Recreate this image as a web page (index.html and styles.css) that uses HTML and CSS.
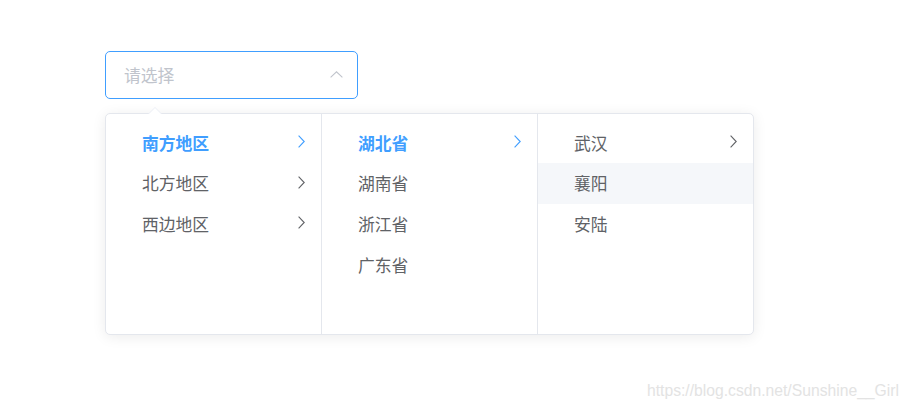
FILE: index.html
```html
<!DOCTYPE html>
<html lang="zh-CN">
<head>
<meta charset="utf-8">
<title>Cascader</title>
<link rel="stylesheet" href="styles.css">
</head>
<body>
<div class="page">
  <div class="cascader">
    <div class="input">
      <span class="placeholder">请选择</span>
      <svg class="caret" width="13" height="7" viewBox="0 0 13 7"><path d="M0.6 6.4 L6.5 0.8 L12.4 6.4" fill="none" stroke="#c0c4cc" stroke-width="1.1"/></svg>
    </div>
    <div class="dropdown">
      <span class="pop-arrow"></span>
      <div class="menus">
        <ul class="menu">
          <li class="node active"><span class="label">南方地区</span><svg class="chev" width="7" height="13" viewBox="0 0 7 13"><path d="M0.6 0.6 L6.2 6.5 L0.6 12.4" fill="none" stroke="currentColor" stroke-width="1.1"/></svg></li>
          <li class="node"><span class="label">北方地区</span><svg class="chev" width="7" height="13" viewBox="0 0 7 13"><path d="M0.6 0.6 L6.2 6.5 L0.6 12.4" fill="none" stroke="currentColor" stroke-width="1.1"/></svg></li>
          <li class="node"><span class="label">西边地区</span><svg class="chev" width="7" height="13" viewBox="0 0 7 13"><path d="M0.6 0.6 L6.2 6.5 L0.6 12.4" fill="none" stroke="currentColor" stroke-width="1.1"/></svg></li>
        </ul>
        <ul class="menu">
          <li class="node active"><span class="label">湖北省</span><svg class="chev" width="7" height="13" viewBox="0 0 7 13"><path d="M0.6 0.6 L6.2 6.5 L0.6 12.4" fill="none" stroke="currentColor" stroke-width="1.1"/></svg></li>
          <li class="node"><span class="label">湖南省</span></li>
          <li class="node"><span class="label">浙江省</span></li>
          <li class="node"><span class="label">广东省</span></li>
        </ul>
        <ul class="menu">
          <li class="node"><span class="label">武汉</span><svg class="chev" width="7" height="13" viewBox="0 0 7 13"><path d="M0.6 0.6 L6.2 6.5 L0.6 12.4" fill="none" stroke="currentColor" stroke-width="1.1"/></svg></li>
          <li class="node hover"><span class="label">襄阳</span></li>
          <li class="node"><span class="label">安陆</span></li>
        </ul>
      </div>
    </div>
  </div>
  <div class="watermark">https://blog.csdn.net/Sunshine__Girl</div>
</div>
</body>
</html>
```

FILE: styles.css
```css
html, body {
  margin: 0;
  padding: 0;
  background: #ffffff;
}

.page {
  width: 909px;
  height: 409px;
  box-sizing: border-box;
  padding-top: 51px;
  font-family: "Noto Sans CJK SC", "Noto Sans", sans-serif;
  color: #606266;
  overflow: hidden;
}

.cascader {
  margin-left: 105px;
  width: 649px;
}

.input {
  width: 253px;
  height: 48px;
  box-sizing: border-box;
  border: 1px solid #409eff;
  border-radius: 5px;
  display: flex;
  align-items: center;
  padding: 0 14px 0 18px;
  background: #fff;
}

.placeholder {
  flex: 1;
  font-size: 16.8px;
  color: #c0c4cc;
  line-height: 1;
}

.caret {
  display: block;
  margin-top: -2px;
}

.dropdown {
  position: relative;
  margin-top: 14px;
  width: 649px;
  height: 222px;
  box-sizing: border-box;
  border: 1px solid #e4e7ed;
  border-radius: 5px;
  background: #fff;
  box-shadow: 0 2px 14px 0 rgba(0, 0, 0, 0.08);
}

.pop-arrow {
  position: absolute;
  left: 42px;
  top: -7px;
  width: 0;
  height: 0;
  border-left: 7px solid transparent;
  border-right: 7px solid transparent;
  border-bottom: 7px solid #ebeef5;
}

.pop-arrow::after {
  content: "";
  position: absolute;
  left: -6px;
  top: 1px;
  width: 0;
  height: 0;
  border-left: 6px solid transparent;
  border-right: 6px solid transparent;
  border-bottom: 6px solid #fff;
}

.menus {
  display: flex;
  height: 100%;
}

.menu {
  list-style: none;
  margin: 0;
  padding: 8px 0 0 0;
  width: 216px;
  box-sizing: border-box;
  border-right: 1px solid #e4e7ed;
}

.menu:last-child {
  border-right: none;
  width: 215px;
}

.node {
  display: flex;
  align-items: center;
  height: 40.8px;
  padding: 0 16px 0 36px;
  font-size: 16.8px;
  color: #606266;
}

.node .label {
  flex: 1;
  line-height: 1;
  margin-top: 1px;
}

.node .chev {
  display: block;
  color: #606266;
  margin-top: -2px;
}

.node.active .label {
  color: #409eff;
  font-weight: 700;
}

.node.active .chev {
  color: #409eff;
}

.node.hover {
  background: #f5f7fa;
}

.watermark {
  margin-top: 46px;
  padding-right: 10px;
  text-align: right;
  font-family: "Liberation Sans", Arial, sans-serif;
  font-size: 15.7px;
  color: #e3e3e3;
  line-height: 19px;
}
```
